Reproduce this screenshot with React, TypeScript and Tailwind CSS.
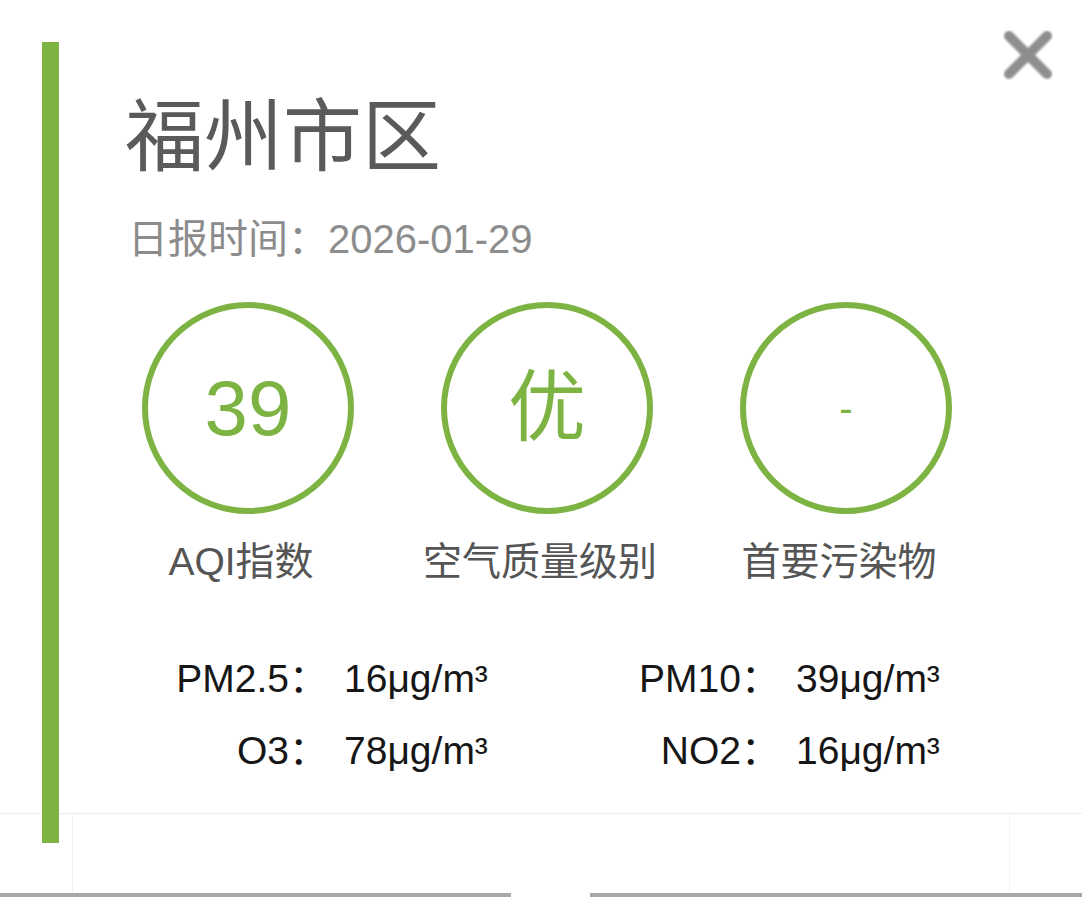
const GREEN = "#7cb342";

const SUMMARY = [
  { value: "39", label: "AQI指数", big: true },
  { value: "优", label: "空气质量级别", big: true },
  { value: "-", label: "首要污染物", big: false },
];

const POLLUTANTS = [
  [
    { name: "PM2.5", value: "16μg/m³" },
    { name: "PM10", value: "39μg/m³" },
  ],
  [
    { name: "O3", value: "78μg/m³" },
    { name: "NO2", value: "16μg/m³" },
  ],
];

function CloseIcon() {
  return (
    <svg className="w-[50px] h-[50px]" viewBox="0 0 50 50" fill="none">
      <path
        d="M6 6L44 44M44 6L6 44"
        stroke="#8e8e8e"
        strokeWidth={10}
        strokeLinecap="round"
        style={{ filter: "blur(0.8px)" }}
      />
    </svg>
  );
}

export default function App() {
  return (
    <div
      className="relative w-[1082px] h-[897px] bg-white overflow-hidden flex flex-col"
      style={{ fontFamily: '"Liberation Sans", "Noto Sans CJK SC", sans-serif' }}
    >
      {/* Close button */}
      <button className="absolute top-[30px] right-[29px] z-20">
        <CloseIcon />
      </button>

      <section className="flex h-[814px] shrink-0 border-b border-[#ececec]">
        <div className="w-[42px] shrink-0" />
        {/* Accent bar */}
        <div className="relative z-10 w-[17px] h-[801px] mt-[42px] shrink-0" style={{ backgroundColor: GREEN }} />

        <div className="pl-[66px] flex flex-col">
          <h1
            className="mt-[91px] text-[79px] leading-[79px] text-[#5a5a5a] font-normal"
            style={{ fontFamily: '"Noto Sans CJK SC", sans-serif' }}
          >
            福州市区
          </h1>
          <p className="mt-[49px] text-[40px] leading-[40px] text-[#8c8c8c] pl-[3px]">日报时间：2026-01-29</p>

          {/* AQI circles */}
          <div className="mt-[43px] ml-[17px] flex gap-[87px]">
            {SUMMARY.map((s) => (
              <div key={s.label} className="w-[212px] flex flex-col items-center">
                <div
                  className="w-[212px] h-[212px] rounded-full border-[6px] flex items-center justify-center"
                  style={{ borderColor: GREEN, color: GREEN }}
                >
                  <span className={s.big ? "text-[78px] leading-none" : "text-[40px] leading-none"}>{s.value}</span>
                </div>
                <span className="mt-[28px] mr-[14px] whitespace-nowrap text-[39px] leading-[39px] text-[#555555]">
                  {s.label}
                </span>
              </div>
            ))}
          </div>

          {/* Pollutant readings */}
          <div className="mt-[62px] flex flex-col text-[39px] leading-[72px] text-[#161616]">
            {POLLUTANTS.map((row, i) => (
              <div key={i} className="flex">
                {row.map((p) => (
                  <div key={p.name} className="flex w-[452px]">
                    <span className="w-[203px] text-right whitespace-nowrap">{p.name}：</span>
                    <span className="ml-[16px] whitespace-nowrap">{p.value}</span>
                  </div>
                ))}
              </div>
            ))}
          </div>
        </div>
      </section>

      <div className="flex-1 flex flex-col">
        <div className="flex-1 flex">
          <div className="w-[72px]" />
          <div className="flex-1 border-l border-r border-[#f2f2f2]" />
          <div className="w-[72px]" />
        </div>
        <div className="flex h-[4px]">
          <div className="w-[511px] bg-[#a8a8a8]" />
          <div className="w-[79px]" />
          <div className="flex-1 bg-[#a8a8a8]" />
        </div>
      </div>
    </div>
  );
}
